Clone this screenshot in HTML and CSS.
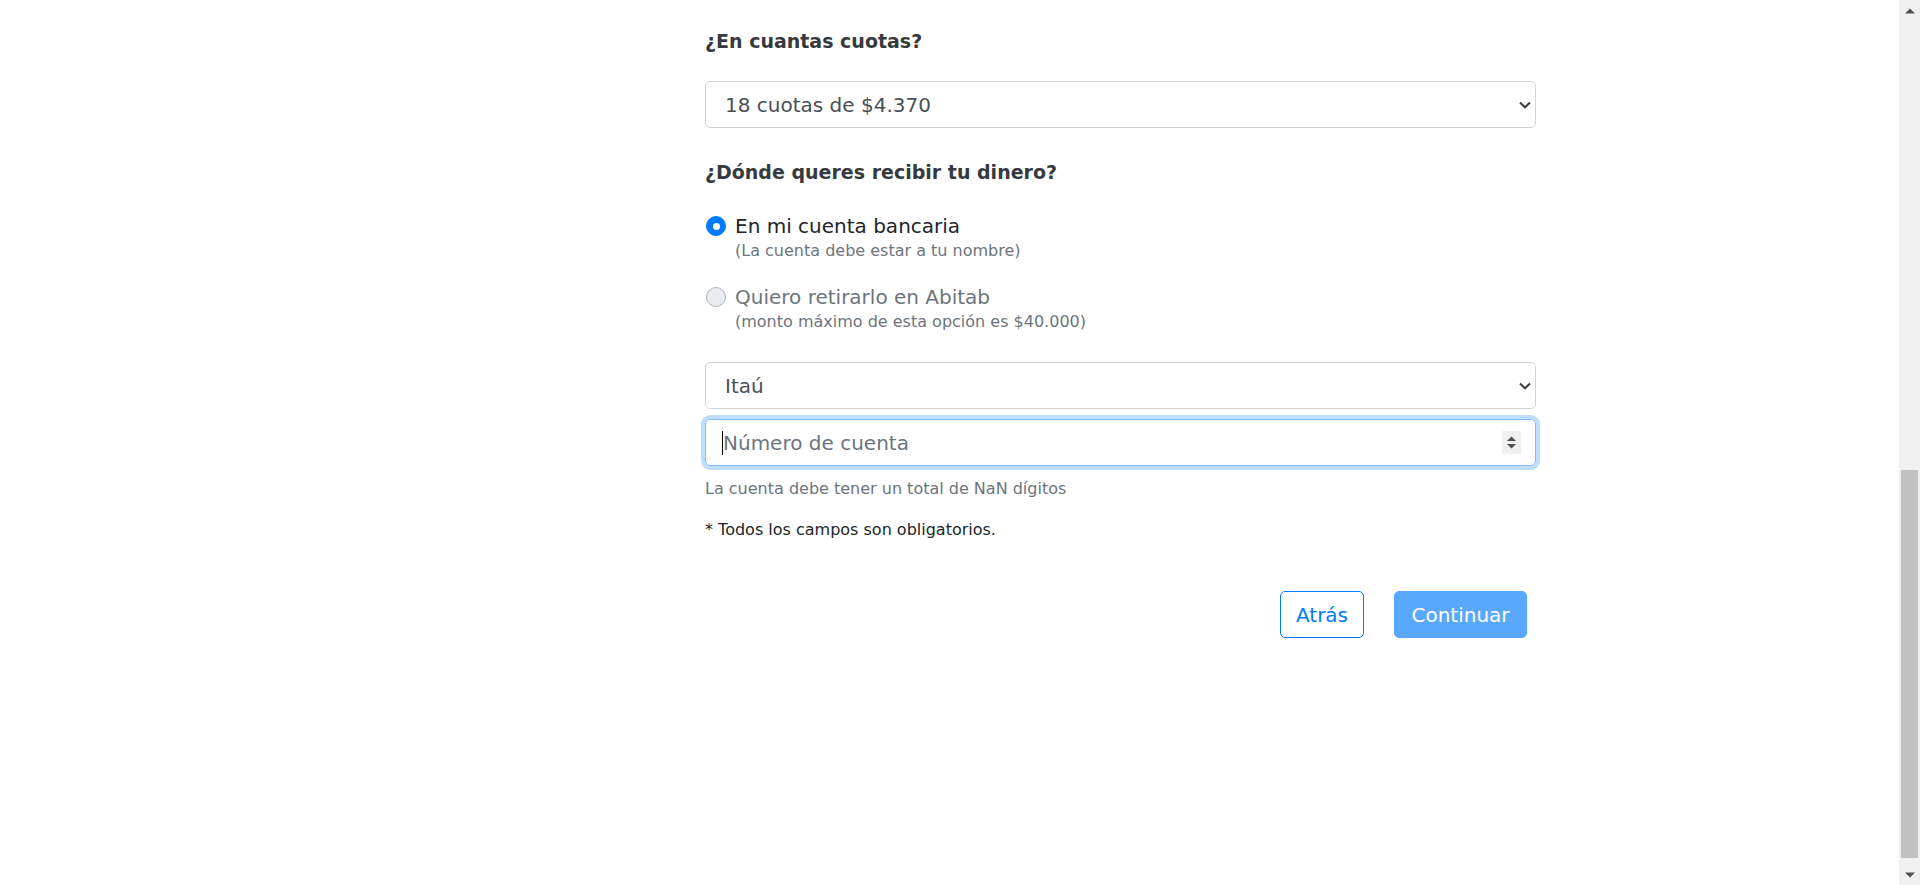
FILE: index.html
```html
<!DOCTYPE html>
<html lang="es">
<head>
<meta charset="utf-8">
<title>Solicitud</title>
<link rel="stylesheet" href="styles.css">
</head>
<body>
<div class="page">
  <main class="viewport">
    <form class="form">
      <h2 class="title">¿En cuantas cuotas?</h2>
      <div class="select">
        <span class="select-value">18 cuotas de $4.370</span>
        <svg class="chevron" width="12" height="8" viewBox="0 0 12 8"><path d="M1 1.5 L6 6.3 L11 1.5" fill="none" stroke="#3c3c3c" stroke-width="2"/></svg>
      </div>

      <h2 class="title title-second">¿Dónde queres recibir tu dinero?</h2>

      <div class="option">
        <span class="radio radio-checked"><span class="radio-dot"></span></span>
        <span class="option-label">En mi cuenta bancaria</span>
        <span class="option-note">(La cuenta debe estar a tu nombre)</span>
      </div>

      <div class="option option-second">
        <span class="radio radio-disabled"></span>
        <span class="option-label option-label-disabled">Quiero retirarlo en Abitab</span>
        <span class="option-note">(monto máximo de esta opción es $40.000)</span>
      </div>

      <div class="select select-bank">
        <span class="select-value">Itaú</span>
        <svg class="chevron" width="12" height="8" viewBox="0 0 12 8"><path d="M1 1.5 L6 6.3 L11 1.5" fill="none" stroke="#3c3c3c" stroke-width="2"/></svg>
      </div>

      <div class="input input-focus">
        <span class="caret"></span>
        <span class="placeholder">Número de cuenta</span>
        <span class="spin">
          <svg width="19" height="23" viewBox="0 0 19 23"><path d="M5 10 L9.5 5.5 L14 10 Z" fill="#505050"/><path d="M5 13 L9.5 17.5 L14 13 Z" fill="#505050"/></svg>
        </span>
      </div>

      <p class="help">La cuenta debe tener un total de NaN dígitos</p>
      <p class="note">* Todos los campos son obligatorios.</p>

      <div class="actions">
        <button type="button" class="btn btn-outline">Atrás</button>
        <button type="button" class="btn btn-primary" disabled>Continuar</button>
      </div>
    </form>
  </main>

  <div class="scrollbar">
    <div class="sb-button">
      <svg width="10" height="6" viewBox="0 0 10 6"><path d="M0 5.5 L5 0.5 L10 5.5 Z" fill="#505050"/></svg>
    </div>
    <div class="sb-track"><div class="sb-thumb"></div></div>
    <div class="sb-button">
      <svg width="10" height="6" viewBox="0 0 10 6"><path d="M0 0.5 L5 5.5 L10 0.5 Z" fill="#505050"/></svg>
    </div>
  </div>
</div>
</body>
</html>
```

FILE: styles.css
```css
html, body {
  margin: 0;
  padding: 0;
  background: #ffffff;
}

body {
  font-family: "DejaVu Sans", "Open Sans", sans-serif;
  color: #212529;
}

.page {
  display: flex;
  height: 885px;
  overflow: hidden;
}

.viewport {
  flex: 1;
  background: #ffffff;
}

.form {
  width: 831px;
  margin: 0 0 0 705px;
  padding-top: 29px;
}

.title {
  margin: 0 0 28px;
  font-size: 19px;
  line-height: 24px;
  font-weight: 700;
  color: #363a3e;
}

.title-second {
  margin-top: 32px;
}

.select {
  box-sizing: border-box;
  height: 47px;
  border: 1px solid #ced4da;
  border-radius: 5px;
  padding: 0 4px 0 19px;
  display: flex;
  align-items: center;
  justify-content: space-between;
  font-size: 20px;
  color: #495057;
}

.chevron {
  display: block;
}

.select-bank {
  margin-top: 30px;
}

.option {
  display: grid;
  grid-template-columns: 30px 1fr;
  grid-template-rows: 28px 21px;
  align-items: center;
}

.option-second {
  margin-top: 22px;
}

.radio {
  box-sizing: border-box;
  width: 20px;
  height: 20px;
  margin-left: 1px;
  border-radius: 50%;
  display: flex;
  align-items: center;
  justify-content: center;
  grid-row: 1;
  grid-column: 1;
}

.radio-checked {
  background: #007bff;
  border: 1px solid #007bff;
}

.radio-dot {
  width: 7px;
  height: 7px;
  border-radius: 50%;
  background: #ffffff;
}

.radio-disabled {
  background: #e9ecef;
  border: 1px solid #adb5bd;
}

.option-label {
  grid-row: 1;
  grid-column: 2;
  font-size: 20px;
  line-height: 28px;
  color: #212529;
}

.option-label-disabled {
  color: #6c757d;
}

.option-note {
  grid-row: 2;
  grid-column: 2;
  align-self: end;
  font-size: 16px;
  line-height: 20px;
  color: #6c757d;
}

.input {
  box-sizing: border-box;
  height: 47px;
  margin-top: 10px;
  border: 1px solid #ced4da;
  border-radius: 5px;
  padding: 0 14px 0 16px;
  display: flex;
  align-items: center;
  font-size: 20px;
}

.input-focus {
  border-color: #80bdff;
  box-shadow: 0 0 0 4px rgba(0, 123, 255, 0.25);
}

.caret {
  width: 1px;
  height: 24px;
  background: #000000;
}

.placeholder {
  flex: 1;
  color: #6c757d;
}

.spin {
  display: block;
  width: 19px;
  height: 23px;
  background: #f0f0f0;
}

.spin svg {
  display: block;
}

.help {
  margin: 13px 0 0;
  font-size: 16px;
  line-height: 20px;
  color: #6c757d;
}

.note {
  margin: 21px 0 0;
  font-size: 16px;
  line-height: 20px;
  color: #212529;
}

.actions {
  margin-top: 51px;
  padding-right: 9px;
  display: flex;
  justify-content: flex-end;
  gap: 30px;
}

.btn {
  box-sizing: border-box;
  height: 47px;
  border-radius: 5px;
  font-family: inherit;
  font-size: 20px;
  padding: 0;
  cursor: pointer;
}

.btn-outline {
  width: 84px;
  background: #ffffff;
  border: 1px solid #007bff;
  color: #007bff;
}

.btn-primary {
  width: 133px;
  background: #5aa8fd;
  border: 1px solid #5aa8fd;
  color: #ffffff;
}

.scrollbar {
  width: 21px;
  display: flex;
  flex-direction: column;
  background: #f0f0f0;
}

.sb-button {
  height: 21px;
  display: flex;
  align-items: center;
  justify-content: center;
}

.sb-track {
  flex: 1;
  padding: 449px 2px 0;
}

.sb-thumb {
  height: 388px;
  background: #c1c1c1;
}
```
